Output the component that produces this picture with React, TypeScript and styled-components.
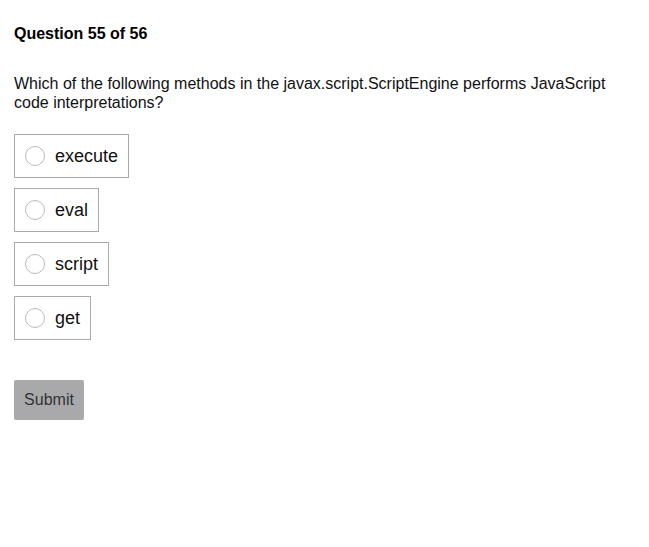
import React, { useState } from "react";
import styled, { createGlobalStyle } from "styled-components";

const Global = createGlobalStyle`
  html, body { margin: 0; padding: 0; background: #fff; }
  body { font-family: Arial, "Liberation Sans", sans-serif; color: #000; }
`;

const Page = styled.div`
  padding: 25px 14px;
  display: flex;
  flex-direction: column;
  align-items: flex-start;
`;

const Title = styled.div`
  font-size: 16px;
  font-weight: bold;
  line-height: 18px;
`;

const Question = styled.div`
  margin-top: 31px;
  font-size: 16px;
  line-height: 19px;
  width: 600px;
  color: #111;
`;

const Options = styled.div`
  margin-top: 22px;
  display: flex;
  flex-direction: column;
  align-items: flex-start;
  gap: 10px;
`;

const Option = styled.label`
  display: flex;
  align-items: center;
  height: 44px;
  box-sizing: border-box;
  padding: 0 10px;
  border: 1px solid #aaa;
  cursor: pointer;
  font-size: 18px;
  color: #111;
`;

const Radio = styled.span<{ $checked: boolean }>`
  width: 20px;
  height: 20px;
  box-sizing: border-box;
  border-radius: 50%;
  border: 1px solid #bbb;
  margin-right: 10px;
  background: ${(p) => (p.$checked ? "radial-gradient(#333 35%, #fff 40%)" : "#fff")};
`;

const Submit = styled.button`
  margin-top: 40px;
  width: 70px;
  height: 40px;
  border: none;
  border-radius: 2px;
  background: #a9a9ab;
  color: #333;
  font-family: Arial, "Liberation Sans", sans-serif;
  font-size: 16px;
  padding: 0;
`;

const answers = ["execute", "eval", "script", "get"];

export default function App() {
  const [sel, setSel] = useState<number | null>(null);
  return (
    <Page>
      <Global />
      <Title>Question 55 of 56</Title>
      <Question>
        Which of the following methods in the javax.script.ScriptEngine performs JavaScript code interpretations?
      </Question>
      <Options>
        {answers.map((a, i) => (
          <Option key={a} onClick={() => setSel(i)}>
            <Radio $checked={sel === i} />
            {a}
          </Option>
        ))}
      </Options>
      <Submit>Submit</Submit>
    </Page>
  );
}
